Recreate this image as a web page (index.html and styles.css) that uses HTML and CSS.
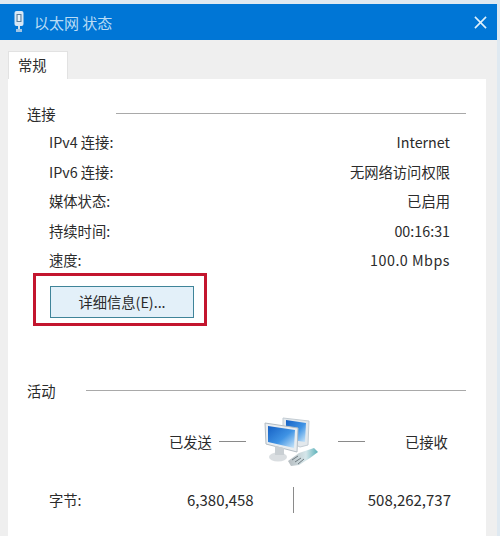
FILE: index.html
```html
<!DOCTYPE html>
<html lang="zh-CN">
<head>
<meta charset="utf-8">
<title>以太网 状态</title>
<link rel="stylesheet" href="styles.css">
</head>
<body>
<div class="window">
  <header class="titlebar">
    <svg class="title-icon" viewBox="0 0 14 24" width="14" height="24" aria-hidden="true">
      <rect x="2.5" y="1" width="9" height="15" rx="2" fill="#d9e8f5"/>
      <rect x="4.5" y="4" width="5" height="8" fill="#5d7f9c"/>
      <rect x="5.6" y="5" width="2.8" height="6" fill="#e8f2fa"/>
      <rect x="6" y="16" width="2" height="3" fill="#cfe0ee"/>
      <rect x="4" y="19" width="6" height="3" fill="#9fc4e4"/>
    </svg>
    <span class="title-text">以太网 状态</span>
    <svg class="close" viewBox="0 0 14 14" width="13" height="13" aria-hidden="true">
      <path d="M1 1 L13 13 M13 1 L1 13" stroke="#dff0fb" stroke-width="1.7" fill="none"/>
    </svg>
  </header>
  <div class="body">
    <div class="tabs"><div class="tab">常规</div></div>
    <main class="panel">
      <section class="connection">
        <div class="group-head"><span>连接</span><i class="rule rule-long"></i></div>
        <dl class="rows">
          <div class="row"><dt>IPv4 连接:</dt><dd>Internet</dd></div>
          <div class="row"><dt>IPv6 连接:</dt><dd>无网络访问权限</dd></div>
          <div class="row"><dt>媒体状态:</dt><dd>已启用</dd></div>
          <div class="row"><dt>持续时间:</dt><dd>00:16:31</dd></div>
          <div class="row"><dt>速度:</dt><dd class="wide">100.0 Mbps</dd></div>
        </dl>
        <div class="details"><button class="details-btn" type="button">详细信息(E)...</button></div>
      </section>
      <section class="activity">
        <div class="group-head"><span>活动</span><i class="rule rule-short"></i></div>
        <div class="flow">
          <span class="sent">已发送</span>
          <i class="dash"></i>
          <svg class="net" viewBox="0 0 56 54" width="56" height="54" aria-hidden="true">
            <defs>
              <linearGradient id="scr" x1="0" y1="0" x2="1" y2="1">
                <stop offset="0" stop-color="#1560c4"/>
                <stop offset="0.55" stop-color="#3f93e4"/>
                <stop offset="1" stop-color="#cfe9fa"/>
              </linearGradient>
              <linearGradient id="plug" x1="0" y1="0" x2="1" y2="0">
                <stop offset="0" stop-color="#b6bcc0"/>
                <stop offset="0.6" stop-color="#d5e6ea"/>
                <stop offset="1" stop-color="#58b0b8"/>
              </linearGradient>
            </defs>
            <path d="M19 3 L45 6 L44 30 L36 32 L19 24 Z" fill="#e3e8ec" stroke="#c3ccd3" stroke-width="1"/>
            <path d="M22 5 L42 8 L41 27 L22 24 Z" fill="url(#scr)"/>
            <path d="M1 8 L34 13 L33 37 L2 29 Z" fill="#e9edf0" stroke="#b4bdc4" stroke-width="1"/>
            <path d="M4 11 L31 15 L30 33 L4 27 Z" fill="url(#scr)"/>
            <ellipse cx="14" cy="42" rx="9" ry="4.5" fill="#dadee1"/>
            <path d="M11 31 L20 33 L20 40 L11 40 Z" fill="#c9cfd3"/>
            <path d="M24 46 L35 38 L50 33 L54 37 L46 43 L35 50 L27 51 Z" fill="url(#plug)"/>
            <path d="M28 45 L34 41 M31 47 L37 43 M34 49 L40 44" stroke="#6f7a80" stroke-width="1" fill="none"/>
          </svg>
          <i class="dash"></i>
          <span class="received">已接收</span>
        </div>
        <div class="bytes">
          <span class="bytes-label">字节:</span>
          <span class="bytes-sent">6,380,458</span>
          <i class="divider"></i>
          <span class="bytes-received">508,262,737</span>
        </div>
      </section>
    </main>
  </div>
</div>
</body>
</html>
```

FILE: styles.css
```css
* { box-sizing: border-box; }
html, body { margin: 0; padding: 0; }
body {
  width: 500px;
  height: 536px;
  overflow: hidden;
  background: #dfe9f1;
  font-family: "Noto Sans CJK SC", "Liberation Sans", sans-serif;
  font-size: 14.3px;
  color: #2b2b2b;
}
.window {
  height: 536px;
  padding-top: 4px;
  padding-right: 3px;
  display: flex;
  flex-direction: column;
}
.titlebar {
  height: 36px;
  flex: none;
  background: #0076d6;
  display: flex;
  align-items: center;
  padding: 0 10px 0 12px;
  color: #b9dcf5;
}
.title-icon { flex: none; margin-right: 8px; }
.title-text { font-size: 15px; flex: 1; }
.close { flex: none; }
.body {
  flex: 1;
  min-height: 0;
  background: #efefef;
  padding: 11px 11px 0 8px;
  display: flex;
  flex-direction: column;
}
.tabs { height: 28px; flex: none; display: flex; }
.tab {
  width: 60px;
  background: #fff;
  border: 1px solid #e2e2e2;
  border-bottom: 0;
  padding-left: 9px;
  font-size: 14.3px;
  line-height: 25px;
}
.panel {
  flex: 1;
  min-height: 0;
  background: #fff;
  padding: 22px 20px 0 19px;
}
.group-head {
  display: flex;
  align-items: center;
  height: 24px;
}
.rule { display: block; height: 1px; background: #a9a9a9; flex: 1; }
.rule-long { margin-left: 60px; }
.rule-short { margin-left: 30px; }
.rows { margin: 2px 0 0; padding: 0 16px 0 22px; }
.row {
  display: flex;
  justify-content: space-between;
  align-items: center;
  height: 29.5px;
}
.row dt, .row dd { margin: 0; }
.wide { letter-spacing: 0.5px; }
.details { margin: 11px 0 0 23px; }
.details-btn {
  position: relative;
  display: block;
  width: 144px;
  height: 32px;
  padding: 0;
  background: #e3f0f9;
  border: 1px solid #3f8499;
  font: inherit;
  color: #2b2b2b;
}
.details-btn::after {
  content: "";
  position: absolute;
  inset: -14px -14px -9px -18px;
  border: 3px solid #c3162e;
  pointer-events: none;
}
.activity { margin-top: 61px; }
.flow {
  display: flex;
  align-items: center;
  margin-top: 12px;
  height: 54px;
  padding-left: 142px;
}
.dash { display: block; width: 27px; height: 1px; background: #8a8a8a; flex: none; }
.sent { width: 50px; }
.net { flex: none; margin: 0 18px; }
.received { margin-left: 40px; }
.bytes {
  display: flex;
  align-items: center;
  height: 26px;
  margin-top: 18px;
  padding-left: 22px;
}
.bytes-label { width: 138px; }
.bytes-sent { width: 106px; font-size: 15px; }
.divider { display: block; width: 1px; height: 26px; background: #8a8a8a; }
.bytes-received { margin-left: auto; margin-right: 15px; font-size: 15px; }
```
